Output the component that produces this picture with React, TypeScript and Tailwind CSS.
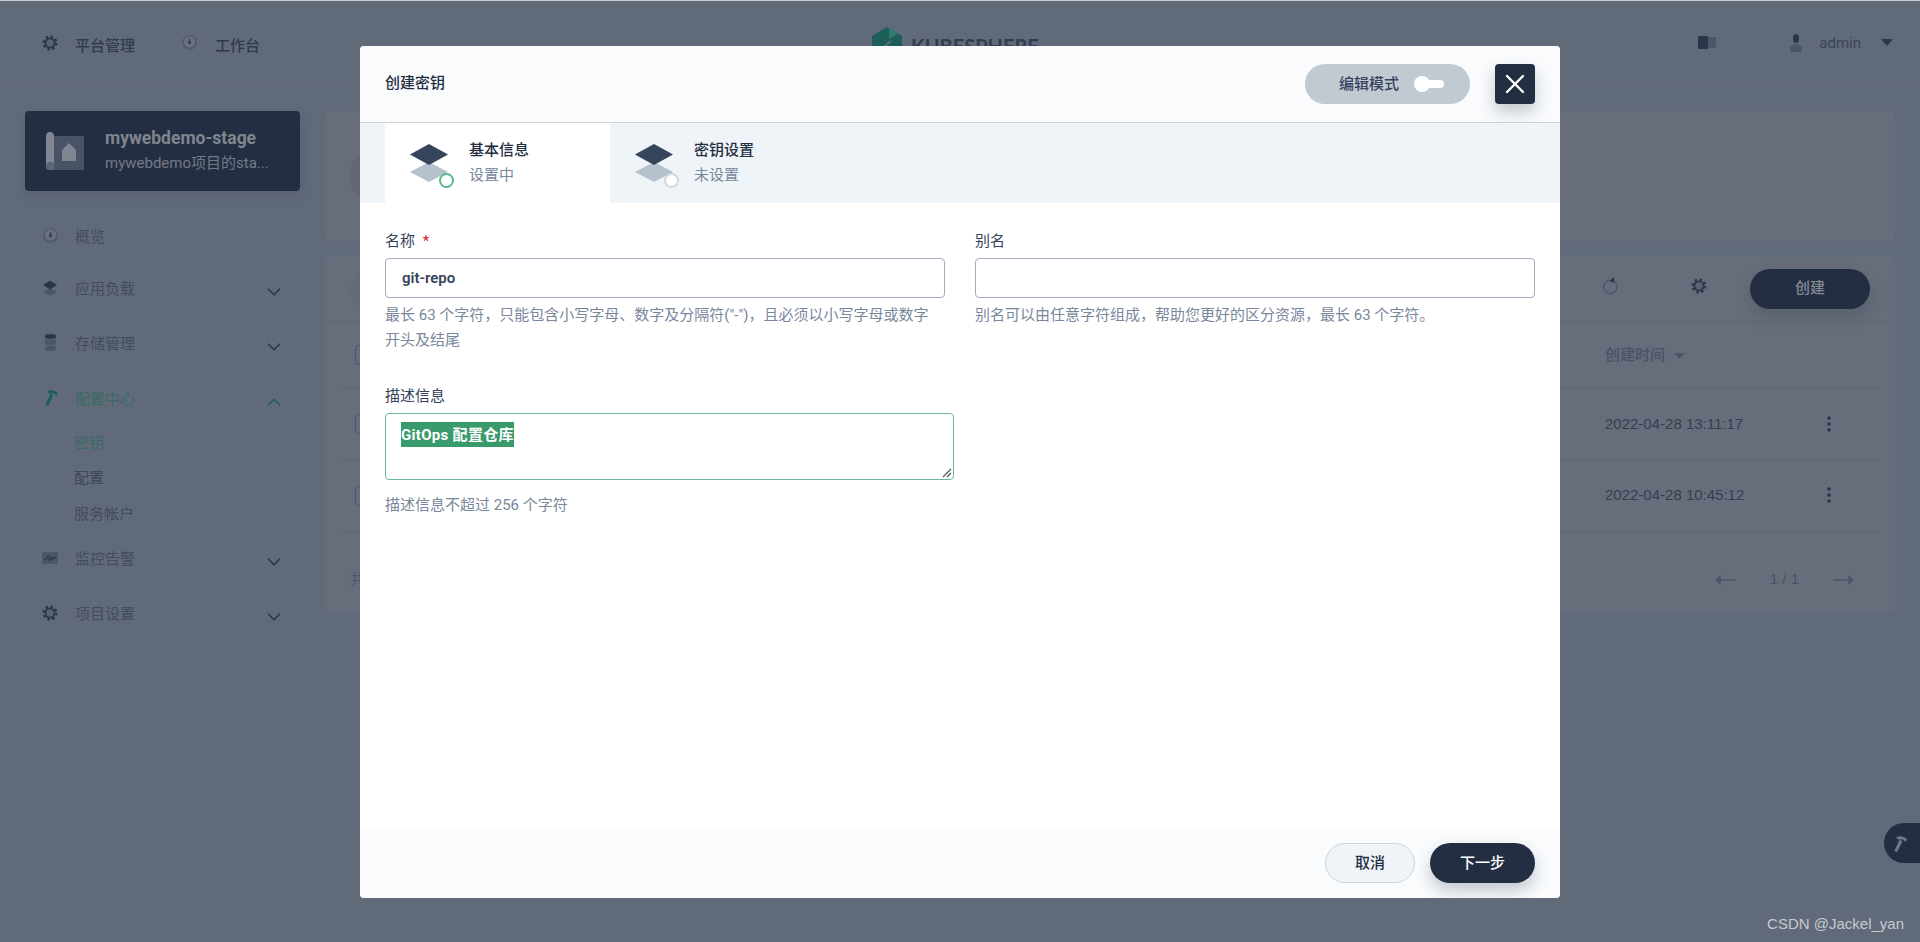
import { ChevronDown, ChevronUp, X } from "lucide-react";

function GearIcon({ className = "size-[16px]" }: { className?: string }) {
  return (
    <svg viewBox="0 0 16 16" className={className} fill="none">
      <circle cx="8" cy="8" r="6.4" stroke="#2c3549" strokeWidth="2.2" strokeDasharray="2.4 2.6" />
      <circle cx="8" cy="8" r="4.6" stroke="#2c3549" strokeWidth="1.8" fill="#5a6374" />
    </svg>
  );
}

function DialIcon() {
  return (
    <svg viewBox="0 0 16 16" className="size-[15px]">
      <circle cx="8" cy="8" r="8" fill="#525b6e" />
      <circle cx="8" cy="7.2" r="6" fill="#6a707d" />
      <path d="M8 3.5 9.3 8a1.4 1.4 0 1 1-2.6 0Z" fill="#2c3549" />
    </svg>
  );
}

function LayersIcon() {
  return (
    <svg viewBox="0 0 16 16" className="size-[16px]">
      <path d="M8 8 15 12 8 15.6 1 12Z" fill="#4d5669" />
      <path d="M8 .6 15 5 8 9.4 1 5Z" fill="#2c3549" />
    </svg>
  );
}

function DbIcon() {
  return (
    <svg viewBox="0 0 14 18" className="h-[17px] w-[13px]">
      <rect x="1" y="6" width="12" height="5.5" fill="#4d5669" />
      <rect x="1" y="12.5" width="12" height="5.5" rx="2.5" fill="#4d5669" />
      <rect x="1" y="0" width="12" height="5" rx="2.5" fill="#2c3549" />
    </svg>
  );
}

function HammerIcon({ color = "#1d5f58" }: { color?: string }) {
  return (
    <svg viewBox="0 0 16 18" className="h-[17px] w-[15px]">
      <path d="M2.5 17 8 5 11 6.5 5.5 18Z" fill={color} />
      <path d="M4 3C7 .5 12 .5 16 4.5L14.5 7 11 4.5 8 5Z" fill={color} />
    </svg>
  );
}

function PulseIcon() {
  return (
    <svg viewBox="0 0 16 12" className="h-[12px] w-[16px]" fill="none">
      <rect width="16" height="12" rx="1" fill="#4d5669" />
      <path d="M1.5 7H4.5L6 4 7.6 8.6 9.2 5 10.4 7.4 12 5.4 14.5 6" stroke="#2c3549" strokeWidth="1.1" />
    </svg>
  );
}

function StepIcon({ ringClass }: { ringClass: string }) {
  return (
    <div className="relative h-[38px] w-[38px] shrink-0">
      <svg viewBox="0 0 38 38" className="h-[38px] w-[38px]">
        <path d="M19 18 38 28 19 38 0 28Z" fill="#b6c1ce" />
        <path d="M19 0 38 10.5 19 21 0 10.5Z" fill="#36455c" />
      </svg>
      <div className={`absolute -right-[6px] bottom-[-6px] size-[15px] rounded-full border-2 bg-white ${ringClass}`} />
    </div>
  );
}

function NavItem({
  icon,
  label,
  active,
  open,
  arrow = true,
  className = "h-[55px]",
}: {
  icon: React.ReactNode;
  label: string;
  active?: boolean;
  open?: boolean;
  arrow?: boolean;
  className?: string;
}) {
  return (
    <div className={`flex items-center pl-[15px] pr-[15px] ${className}`}>
      <span className="flex w-[20px] -translate-y-[2px] justify-center">{icon}</span>
      <span className={`ml-[15px] flex-1 text-[15px] ${active ? "text-[#3a6a66]" : "text-[#434c5f]"}`}>{label}</span>
      {arrow &&
        (open ? (
          <ChevronUp className="size-[22px] translate-y-[2px] text-[#1d5f58]" strokeWidth={1.8} />
        ) : (
          <ChevronDown className="size-[22px] translate-y-[2px] text-[#2c3549]" strokeWidth={1.8} />
        ))}
    </div>
  );
}

function Row({ time, className = "" }: { time: string; className?: string }) {
  return (
    <div className="mx-[15px] flex h-[72px] items-center border-b border-[#5f6775]">
      <div className="ml-[15px] size-[20px] rounded-[3px] border border-[#4d5669]" />
      <div className={`ml-auto flex w-[275px] items-center ${className}`}>
        <span className="w-[221.5px] font-['Liberation_Sans',sans-serif] text-[15px] text-[#353d50]">{time}</span>
        <svg viewBox="0 0 4 16" className="h-[16px] w-[4px] -translate-y-[1px]" fill="#2c3549">
          <circle cx="2" cy="2" r="1.8" />
          <circle cx="2" cy="8" r="1.8" />
          <circle cx="2" cy="14" r="1.8" />
        </svg>
      </div>
    </div>
  );
}

function PageArrow({ flip, color }: { flip?: boolean; color: string }) {
  return (
    <svg viewBox="0 0 22 12" className={`h-[12px] w-[21px] ${flip ? "rotate-180" : ""}`}>
      <path d="M0 6 6 .5V5.3H22V6.7H6V11.5Z" fill={color} />
    </svg>
  );
}

export default function App() {
  return (
    <div className="relative h-[942px] overflow-hidden bg-[#616a79] font-[Roboto,'Noto_Sans_CJK_SC',sans-serif] text-[15px] text-[#36435c]">
      <div className="h-px bg-[#c9ccd1]" />

      {/* page behind the dialog */}
      <header className="relative flex h-[84px] items-center border-b border-[#656c7a] pl-[42px] pr-[27px]">
        <div className="flex items-center font-medium text-[#30394d]">
          <GearIcon />
          <span className="ml-[17px] translate-y-[4px]">平台管理</span>
          <span className="ml-[47px]">
            <DialIcon />
          </span>
          <span className="ml-[18px] translate-y-[4px]">工作台</span>
        </div>
        <div className="absolute left-[871px] top-[26px] flex items-start">
          <svg viewBox="0 0 32 36" className="h-[36px] w-[32px]">
            <path d="M16 0 31 9V27L16 36 1 27V9Z" fill="#1d5f58" />
            <path d="M18 0 18 12 28 6Z" fill="#616a79" />
            <path d="M18 1 27 6 18 11Z" fill="#2a7a70" />
            <path d="M20 14 10 22 20 20 14 30" stroke="#616a79" strokeWidth="2" fill="none" />
          </svg>
          <span className="ml-[8px] mt-[3px] font-[Lato,sans-serif] text-[20px] font-bold leading-[32px] text-[#343c51]">
            KUBESPHERE
          </span>
        </div>
        <div className="ml-auto flex items-center">
          <svg viewBox="0 0 18 13" className="h-[13px] w-[18px]">
            <rect width="10" height="13" fill="#2c3549" />
            <rect x="10" y="1" width="8" height="11" fill="#4d5669" />
          </svg>
          <svg viewBox="0 0 14 18" className="ml-[73px] h-[18px] w-[14px]">
            <path d="M4 3.5a3 3.5 0 0 1 6 0v2a3 3.5 0 0 1-6 0Z" fill="#2c3549" />
            <path d="M1 18v-5l4-3h4l4 3v5Z" fill="#4d5669" />
          </svg>
          <span className="ml-[16px] translate-y-[1px] text-[#3c445a]">admin</span>
          <svg viewBox="0 0 12 7" className="ml-[20px] h-[7px] w-[12px]">
            <path d="M0 0H12L6 7Z" fill="#2c3549" />
          </svg>
        </div>
      </header>

      <div className="flex">
        <aside className="w-[300px] shrink-0 pl-[25px]">
          <div className="mt-[26px] flex h-[80px] items-center rounded-[4px] bg-[#242e42] pl-[21px] shadow-[0_4px_12px_rgba(36,46,66,0.15)]">
            <svg viewBox="0 0 38 38" className="size-[38px] shrink-0">
              <rect x="5" y="4" width="33" height="34" fill="#495366" />
              <path d="M0 4a4 4 0 0 1 8 0V32C5 29 2 30 0 33Z" fill="#7f8591" />
              <path d="M0 33c2-3 5-3 8-1v6H3a3 3 0 0 1-3-3Z" fill="#5e6574" />
              <path d="M16 18 23 11 30 18V29H16Z" fill="#7f8591" />
            </svg>
            <div className="ml-[21px] w-[170px]">
              <div className="text-[17.5px] font-bold leading-[25px] text-[#80858f]">mywebdemo-stage</div>
              <div className="leading-[25px] text-[#737a87]">mywebdemo项目的sta...</div>
            </div>
          </div>

          <div className="mt-[22px]">
            <NavItem icon={<DialIcon />} label="概览" arrow={false} className="h-[49px]" />
            <NavItem icon={<LayersIcon />} label="应用负载" />
            <NavItem icon={<DbIcon />} label="存储管理" />
            <NavItem icon={<HammerIcon />} label="配置中心" active open />
            <div className="-mt-[1.5px] flex flex-col pl-[49px] text-[15px] leading-[35.5px] text-[#3d465a]">
              <span className="text-[#3a6a66]">密钥</span>
              <span>配置</span>
              <span className="text-[#434c5f]">服务帐户</span>
            </div>
            <NavItem icon={<PulseIcon />} label="监控告警" />
            <NavItem icon={<GearIcon />} label="项目设置" />
          </div>
        </aside>

        <main className="ml-[25px] flex-1 pr-[25px] pt-[26px]">
          <div className="flex h-[130px] items-center rounded-[4px] bg-[#676d7a] pl-[25px]">
            <div className="size-[62px] rounded-full bg-[#616874]" />
          </div>
          <div className="mt-[15px] h-[356px] rounded-[4px] bg-[#676d7a]">
            <div className="flex h-[66px] items-center border-b border-[#616874] pl-[25px] pr-[25px]">
              <div className="h-[40px] w-[1150px] rounded-full bg-[#646a77]" />
              <svg viewBox="0 0 20 20" className="ml-auto mr-[72px] size-[18px] -translate-y-[3px]" fill="none">
                <path d="M15.5 5.5a7.5 7.5 0 1 1-5-2" stroke="#4d5669" strokeWidth="1.6" />
                <path d="M14 0 15 6.5 9.5 5Z" fill="#2c3549" />
              </svg>
              <GearIcon className="size-[16px] -translate-y-[3px]" />
              <button className="ml-[43px] h-[40px] w-[120px] rounded-full bg-[#242e42] font-medium text-[#858a94] shadow-[0_8px_16px_rgba(36,46,66,0.2)]">
                创建
              </button>
            </div>
            <div className="mx-[15px] flex h-[66px] items-center border-b border-[#5f6775]">
              <div className="ml-[15px] size-[20px] rounded-[3px] border border-[#4d5669]" />
              <div className="ml-auto flex w-[275px] translate-y-[1px] items-center font-medium text-[#4a5266]">
                创建时间
                <svg viewBox="0 0 12 7" className="ml-[9px] h-[6px] w-[11px]">
                  <path d="M0 0H12L6 7Z" fill="#4d5669" />
                </svg>
              </div>
            </div>
            <Row time="2022-04-28 13:11:17" className="translate-y-[1px]" />
            <Row time="2022-04-28 10:45:12" />
            <div className="flex h-[80px] items-center pl-[25px] pt-[15px]">
              <span className="text-[#4d5669]">共 2 条</span>
              <div className="ml-auto mr-[41px] flex items-center">
                <PageArrow color="#4d5669" />
                <span className="mx-[34px] font-['Liberation_Sans',sans-serif] text-[#4a5266]">1 / 1</span>
                <PageArrow flip color="#4d5669" />
              </div>
            </div>
          </div>
        </main>
      </div>

      <div className="absolute right-0 top-[823px] flex h-[40px] w-[36px] items-center rounded-l-[20px] bg-[#242e42] pl-[8px]">
        <HammerIcon color="#737a87" />
      </div>

      {/* dialog */}
      <div className="absolute inset-x-0 top-[46px] flex justify-center">
        <div className="flex h-[852px] w-[1200px] flex-col overflow-hidden rounded-[4px] bg-white">
          <div className="flex h-[77px] shrink-0 items-center border-b border-[#ccd3db] bg-[#f9fbfd] pl-[25px] pr-[25px]">
            <span className="-translate-y-[1px] font-medium text-[#242e42]">创建密钥</span>
            <div className="ml-auto flex h-[40px] w-[165px] items-center rounded-full bg-[#c1c9d1] pl-[34px]">
              <span className="font-medium text-[#36435c]">编辑模式</span>
              <span className="relative ml-[15px] h-[8px] w-[30px] rounded-full bg-white">
                <span className="absolute left-0 top-[-4px] size-[16px] rounded-full bg-white" />
              </span>
            </div>
            <button className="ml-[25px] flex size-[40px] items-center justify-center rounded-[4px] bg-[#242e42] text-white shadow-[0_8px_16px_rgba(36,46,66,0.25)]">
              <X className="size-[32px]" strokeWidth={1.8} />
            </button>
          </div>

          <div className="flex h-[80px] shrink-0 bg-[#eff4f9] pl-[25px]">
            <div className="flex w-[225px] items-center bg-white pl-[25px]">
              <StepIcon ringClass="border-[#55bc8a]" />
              <div className="ml-[21px]">
                <div className="font-medium leading-[25px] text-[#242e42]">基本信息</div>
                <div className="leading-[25px] text-[#79879c]">设置中</div>
              </div>
            </div>
            <div className="flex w-[225px] items-center pl-[25px]">
              <StepIcon ringClass="border-[#d1d7df]" />
              <div className="ml-[21px]">
                <div className="font-medium leading-[25px] text-[#242e42]">密钥设置</div>
                <div className="leading-[25px] text-[#79879c]">未设置</div>
              </div>
            </div>
          </div>

          <div className="flex-1 px-[25px] pt-[26px] leading-[25px]">
            <div className="grid grid-cols-2 gap-x-[30px]">
              <div>
                <label className="block">
                  名称 <span className="ml-[4px] text-[#ca2621]">*</span>
                </label>
                <div className="mt-[4px] flex h-[40px] items-center rounded-[4px] border border-[#a3adbd] px-[16px] font-semibold text-[#36435c]">
                  git-repo
                </div>
                <p className="mt-[5px] pr-[5px] text-[#79879c]">
                  最长 63 个字符，只能包含小写字母、数字及分隔符("-")，且必须以小写字母或数字开头及结尾
                </p>
              </div>
              <div>
                <label className="block">别名</label>
                <div className="mt-[4px] h-[40px] rounded-[4px] border border-[#a3adbd]" />
                <p className="mt-[5px] text-[#79879c]">别名可以由任意字符组成，帮助您更好的区分资源，最长 63 个字符。</p>
              </div>
            </div>

            <label className="mt-[31px] block">描述信息</label>
            <div className="relative mt-[4px] h-[67px] w-[569px] rounded-[4px] border border-[#6cba92] px-[15px] pt-[8px]">
              <span className="bg-[#399a6b] py-[3.5px] font-bold tracking-[0.3px] text-white">GitOps 配置仓库</span>
              <svg viewBox="0 0 10 10" className="absolute bottom-[1px] right-[1px] size-[10px]" stroke="#555" strokeWidth="1.2">
                <path d="M1 9 9 1M5 9 9 5" />
              </svg>
            </div>
            <p className="mt-[13px] text-[#79879c]">描述信息不超过 256 个字符</p>
          </div>

          <div className="flex h-[70px] shrink-0 items-center justify-end gap-[15px] bg-[#f9fbfd] pr-[25px]">
            <button className="h-[40px] w-[90px] rounded-full border border-[#ccd3db] bg-[#eff4f9] font-medium text-[#242e42]">
              取消
            </button>
            <button className="h-[40px] w-[105px] rounded-full bg-[#242e42] font-medium text-white shadow-[0_8px_16px_rgba(36,46,66,0.25)]">
              下一步
            </button>
          </div>
        </div>
      </div>

      <div className="absolute right-[16px] top-[915px] font-['Liberation_Sans',sans-serif] text-[15px] leading-[18px] text-[#c6cad0]">
        CSDN @Jackel_yan
      </div>
    </div>
  );
}
